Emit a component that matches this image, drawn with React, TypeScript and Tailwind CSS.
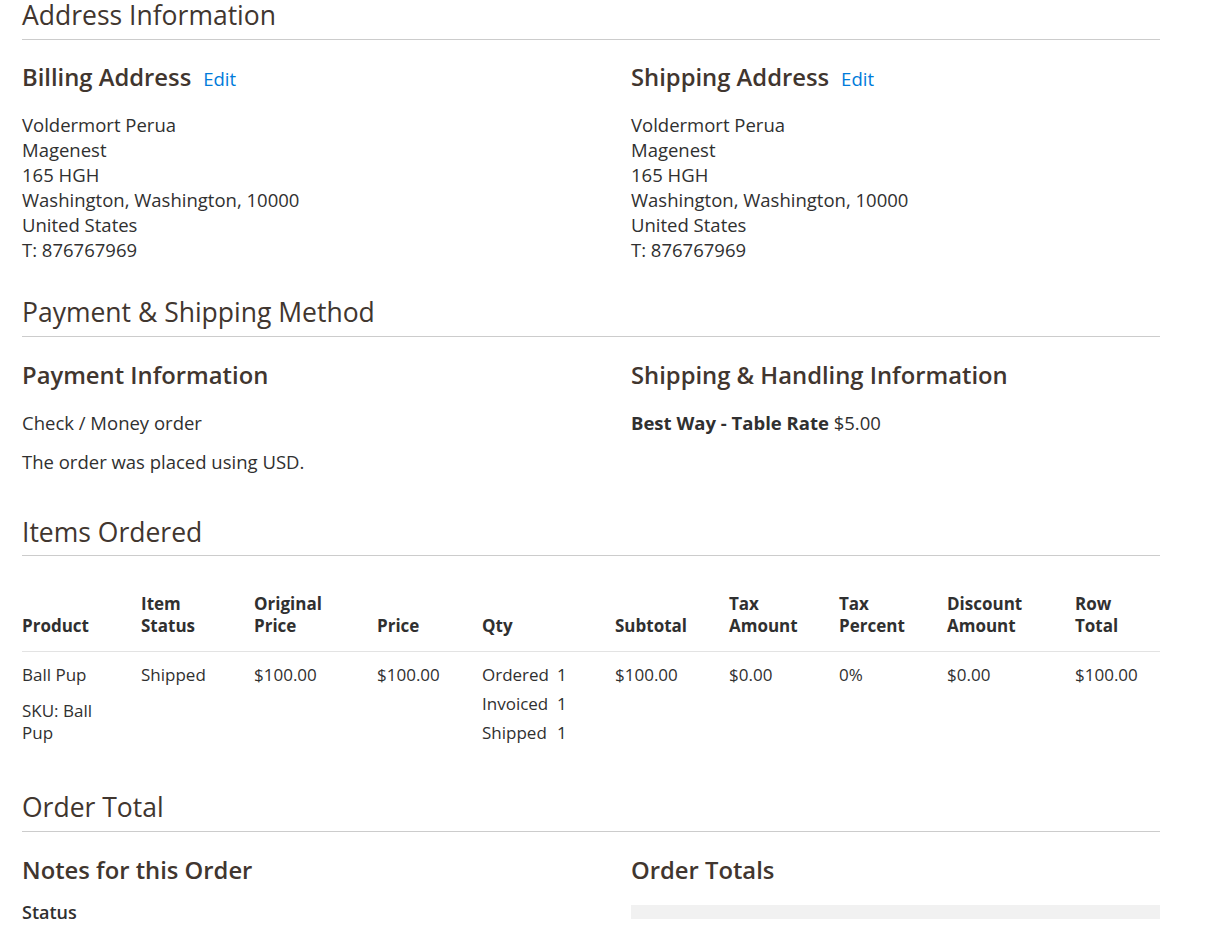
const address = [
  "Voldermort Perua",
  "Magenest",
  "165 HGH",
  "Washington, Washington, 10000",
  "United States",
  "T: 876767969",
];

function SectionTitle({ children }: { children: React.ReactNode }) {
  return (
    <div className="border-b border-[#cccccc] pb-[7px]">
      <span className="text-[26.5px] leading-[31px] text-[#41362f]">{children}</span>
    </div>
  );
}

function ItemTitle({ children, edit }: { children: React.ReactNode; edit?: boolean }) {
  return (
    <div className="flex items-baseline gap-3 leading-[26px]">
      <span className="text-[23.8px] font-semibold text-[#41362f]">{children}</span>
      {edit && <a className="text-[18.5px] text-[#007bdb] cursor-pointer">Edit</a>}
    </div>
  );
}

function AddressBlock({ title }: { title: string }) {
  return (
    <div>
      <ItemTitle edit>{title}</ItemTitle>
      <address className="not-italic mt-[20px] leading-[25px]">
        {address.map((line) => (
          <div key={line}>{line}</div>
        ))}
      </address>
    </div>
  );
}

const headers = [
  ["Product"],
  ["Item", "Status"],
  ["Original", "Price"],
  ["Price"],
  ["Qty"],
  ["Subtotal"],
  ["Tax", "Amount"],
  ["Tax", "Percent"],
  ["Discount", "Amount"],
  ["Row", "Total"],
];

const colWidths = [119, 113, 123, 105, 133, 114, 110, 108, 128, 85];

export default function App() {
  return (
    <div className="bg-white min-h-screen font-['Open_Sans',sans-serif] text-[18.5px] text-[#303030]">
      <div className="w-[1138px] ml-[22px]">
        {/* Address */}
        <SectionTitle>Address Information</SectionTitle>
        <div className="grid grid-cols-2 gap-x-[80px] mt-[24px]">
          <AddressBlock title="Billing Address" />
          <AddressBlock title="Shipping Address" />
        </div>

        {/* Payment & shipping */}
        <div className="mt-[35px]">
          <SectionTitle>Payment &amp; Shipping Method</SectionTitle>
        </div>
        <div className="grid grid-cols-2 gap-x-[80px] mt-[25px]">
          <div>
            <ItemTitle>Payment Information</ItemTitle>
            <div className="mt-[22px] leading-[25px]">
              <div>Check / Money order</div>
              <div className="mt-[14px]">The order was placed using USD.</div>
            </div>
          </div>
          <div>
            <ItemTitle>Shipping &amp; Handling Information</ItemTitle>
            <div className="mt-[22px] leading-[25px]">
              <strong className="font-bold">Best Way - Table Rate</strong> $5.00
            </div>
          </div>
        </div>

        {/* Items */}
        <div className="mt-[43px]">
          <SectionTitle>Items Ordered</SectionTitle>
        </div>
        <table className="w-full table-fixed border-collapse text-[17px] leading-[22px]">
          <colgroup>
            {colWidths.map((w, i) => (
              <col key={i} style={{ width: w }} />
            ))}
          </colgroup>
          <thead>
            <tr className="border-b border-[#e3e3e3]">
              {headers.map((h) => (
                <th key={h.join(" ")} className="text-left align-bottom font-bold pt-[37px] pb-[14px] pr-2 text-[#303030]">
                  {h.map((l) => (
                    <div key={l}>{l}</div>
                  ))}
                </th>
              ))}
            </tr>
          </thead>
          <tbody>
            <tr className="align-top">
              <td className="pt-[12px] pr-[25px]">
                <div>Ball Pup</div>
                <div className="mt-[14px]">SKU: Ball Pup</div>
              </td>
              <td className="pt-[12px] pr-2">Shipped</td>
              <td className="pt-[12px] pr-2">$100.00</td>
              <td className="pt-[12px] pr-2">$100.00</td>
              <td className="pt-[12px] pr-2">
                <div className="grid grid-cols-[auto_1fr] gap-x-[8px] gap-y-[7px] w-max">
                  <span>Ordered</span>
                  <span>1</span>
                  <span>Invoiced</span>
                  <span>1</span>
                  <span>Shipped</span>
                  <span>1</span>
                </div>
              </td>
              <td className="pt-[12px] pr-2">$100.00</td>
              <td className="pt-[12px] pr-2">$0.00</td>
              <td className="pt-[12px] pr-2">0%</td>
              <td className="pt-[12px] pr-2">$0.00</td>
              <td className="pt-[12px]">$100.00</td>
            </tr>
          </tbody>
        </table>

        {/* Order total */}
        <div className="mt-[48px]">
          <SectionTitle>Order Total</SectionTitle>
        </div>
        <div className="grid grid-cols-2 gap-x-[80px] mt-[25px]">
          <div>
            <ItemTitle>Notes for this Order</ItemTitle>
            <div className="mt-[18px] text-[18px] font-semibold leading-[22px]">Status</div>
          </div>
          <div>
            <ItemTitle>Order Totals</ItemTitle>
            <div className="mt-[22px] h-[14px] bg-[#f1f1f1]" />
          </div>
        </div>
      </div>
    </div>
  );
}
